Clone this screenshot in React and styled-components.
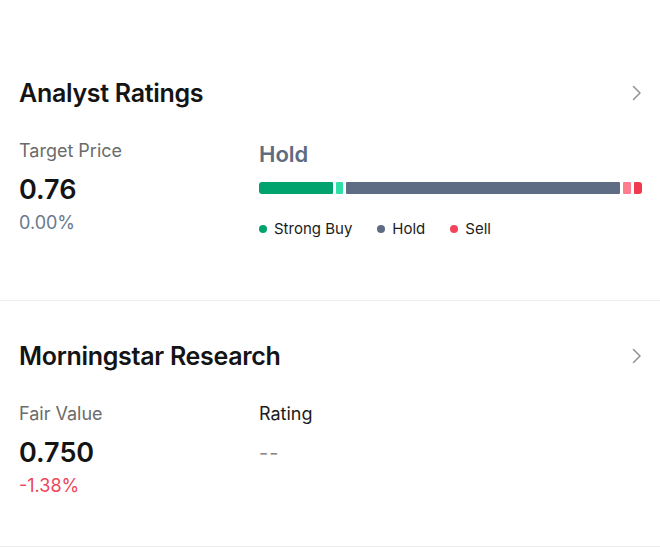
import React from 'react';
import styled, { createGlobalStyle } from 'styled-components';

const GlobalStyle = createGlobalStyle`
  html, body {
    margin: 0;
    padding: 0;
    background: #ffffff;
  }
  body {
    font-family: Inter, "Noto Sans", sans-serif;
    color: #141414;
    -webkit-font-smoothing: antialiased;
  }
`

const Page = styled.div`
  width: 660px;
  padding-top: 38px;
`

const Section = styled.section`
  padding: 37px 18px ${p => p.$bottom}px 19px;
  border-bottom: 1px solid #ececec;
`

const Header = styled.div`
  display: flex;
  align-items: center;
  justify-content: space-between;
  height: 36px;
`

const Title = styled.h2`
  margin: 0;
  font-size: 25px;
  font-weight: 600;
  letter-spacing: -0.3px;
  color: #141414;
`

const Chevron = styled.svg`
  width: 14px;
  height: 16px;
`

const Body = styled.div`
  display: grid;
  grid-template-columns: 240px 1fr;
  margin-top: 28px;
`

const Column = styled.div`
  display: flex;
  flex-direction: column;
  align-items: flex-start;
`

const Label = styled.div`
  font-size: 18px;
  line-height: 24px;
  color: ${p => (p.$dark ? '#1c1c1c' : '#6b6b6b')};
`

const Value = styled.div`
  margin-top: 9px;
  font-size: 27px;
  line-height: 36px;
  font-weight: 600;
  color: #141414;
`

const Empty = styled.div`
  margin-top: 9px;
  font-size: 20px;
  line-height: 36px;
  color: #8a8a8a;
  letter-spacing: 1px;
`

const Change = styled.div`
  margin-top: 3px;
  font-size: 18px;
  line-height: 24px;
  color: ${p => p.$color};
`

const Consensus = styled.div`
  font-size: 22px;
  line-height: 30px;
  font-weight: 600;
  color: #5f6b80;
`

const Bar = styled.div`
  display: flex;
  gap: 3px;
  width: 100%;
  height: 12px;
  margin-top: 13px;
  border-radius: 3px;
  overflow: hidden;
`

const Segment = styled.div`
  height: 100%;
  border-radius: 1px;
  background: ${p => p.$color};
`

const Legend = styled.ul`
  display: flex;
  gap: 25px;
  margin: 23px 0 0;
  padding: 0;
  list-style: none;
`

const LegendItem = styled.li`
  display: flex;
  align-items: center;
  gap: 7px;
  font-size: 15px;
  line-height: 24px;
  color: #1c1c1c;
`

const Dot = styled.span`
  width: 8px;
  height: 8px;
  border-radius: 50%;
  background: ${p => p.$color};
`

const segments = [
  { color: '#00a36d', weight: 74 },
  { color: '#2fe0a6', weight: 7 },
  { color: '#5f6d84', weight: 275 },
  { color: '#ff7d8e', weight: 8 },
  { color: '#f0384f', weight: 8 },
];

const legend = [
  { color: '#00a36d', name: 'Strong Buy' },
  { color: '#5f6b80', name: 'Hold' },
  { color: '#f2455b', name: 'Sell' },
];

const Arrow = () => (
  <Chevron viewBox="0 0 14 16" fill="none">
    <polyline points="5.5,1.5 12,8 5.5,14.5" stroke="#929292" strokeWidth="1.5" strokeLinecap="round" strokeLinejoin="round" />
  </Chevron>
);

export default function App() {
  return (
    <Page>
      <GlobalStyle />
      <Section $bottom={59}>
        <Header>
          <Title>Analyst Ratings</Title>
          <Arrow />
        </Header>
        <Body>
          <Column>
            <Label>Target Price</Label>
            <Value>0.76</Value>
            <Change $color="#6a7890">0.00%</Change>
          </Column>
          <Column>
            <Consensus>Hold</Consensus>
            <Bar>
              {segments.map((s, i) => (
                <Segment key={i} $color={s.color} style={{ flex: s.weight }} />
              ))}
            </Bar>
            <Legend>
              {legend.map(item => (
                <LegendItem key={item.name}>
                  <Dot $color={item.color} />
                  {item.name}
                </LegendItem>
              ))}
            </Legend>
          </Column>
        </Body>
      </Section>
      <Section $bottom={48}>
        <Header>
          <Title>Morningstar Research</Title>
          <Arrow />
        </Header>
        <Body>
          <Column>
            <Label>Fair Value</Label>
            <Value>0.750</Value>
            <Change $color="#f0455a">-1.38%</Change>
          </Column>
          <Column>
            <Label $dark>Rating</Label>
            <Empty>--</Empty>
          </Column>
        </Body>
      </Section>
    </Page>
  );
}
